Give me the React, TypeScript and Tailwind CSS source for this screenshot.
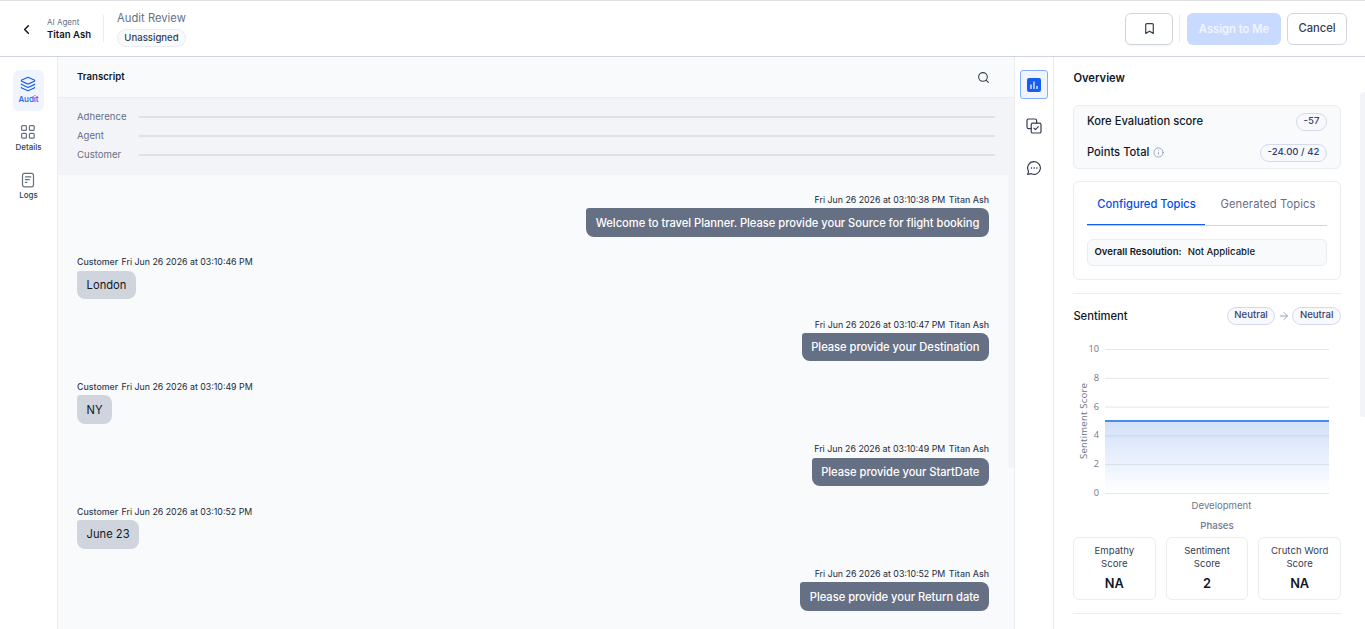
import React from "react";
import { Bookmark, ChevronLeft, Info, Layers, Search, ArrowRight } from "lucide-react";

const messages = [
  { from: "agent", time: "03:10:38", text: "Welcome to travel Planner. Please provide your Source for flight booking" },
  { from: "customer", time: "03:10:46", text: "London" },
  { from: "agent", time: "03:10:47", text: "Please provide your Destination" },
  { from: "customer", time: "03:10:49", text: "NY" },
  { from: "agent", time: "03:10:49", text: "Please provide your StartDate" },
  { from: "customer", time: "03:10:52", text: "June 23" },
  { from: "agent", time: "03:10:52", text: "Please provide your Return date" },
];

function Header() {
  return (
    <header className="flex h-[57px] shrink-0 items-start border-t border-b border-t-[#e0e0e2] border-b-[#d0d5dd] bg-white pr-[18px] pl-[19px]">
      <ChevronLeft className="mt-[21px] h-[15px] w-[15px] text-[#101828]" strokeWidth={2.4} />
      <div className="mt-[15px] ml-[13px] w-[56px]">
        <div className="h-[12px] text-[8px] leading-[13px] whitespace-nowrap text-[#667085]">AI Agent</div>
        <div className="text-[9.6px] leading-[13px] font-semibold whitespace-nowrap text-[#101828]">Titan Ash</div>
      </div>
      <div className="mt-[14px] h-[27px] w-px bg-[#eaecf0]" />
      <div className="mt-[9px] ml-[13px]">
        <div className="h-[19px] text-[11.2px] leading-[16px] tracking-[0.03px] whitespace-nowrap text-[#667085]">Audit Review</div>
        <div className="flex h-[18px] w-[69px] items-center justify-center rounded-full border border-[#eaecf0] bg-[#f9fafb] text-[9.6px] font-medium text-[#344054]">Unassigned</div>
      </div>
      <div className="mt-3 ml-auto flex">
        <button className="flex h-8 w-12 items-center justify-center rounded-md border border-[#d0d5dd] bg-white pb-px shadow-xs">
          <Bookmark className="h-[13px] w-[13px] text-[#344054]" strokeWidth={2.2} />
        </button>
        <div className="mt-[2px] ml-[6px] h-[27px] w-px bg-[#eaecf0]" />
        <button className="ml-[7px] h-8 w-[94px] rounded-md bg-[#c8daff] text-[11.2px] font-semibold text-[#f1f5ff]">Assign to Me</button>
        <button className="ml-[6px] h-8 w-[60px] rounded-md border border-[#d0d5dd] bg-white pb-px text-[11.2px] font-medium text-[#344054]">Cancel</button>
      </div>
    </header>
  );
}

function NavItem({ label, active, children }: { label: string; active?: boolean; children: React.ReactNode }) {
  return (
    <div className={active ? "flex h-[41px] w-[31px] flex-col items-center rounded-md bg-[#eff4ff] pt-[6px] text-[#155eef]" : "flex h-[41px] w-[31px] flex-col items-center pt-[6px] text-[#667085]"}>
      {children}
      <span className={active ? "mt-px text-[8px] leading-[12px] font-medium" : "mt-px text-[8px] leading-[12px] font-medium text-[#344054]"}>{label}</span>
    </div>
  );
}

function SideNav() {
  return (
    <nav className="flex w-[58px] shrink-0 flex-col items-center gap-[7px] border-r border-[#eaecf0] bg-white pt-[13px]">
      <NavItem label="Audit" active>
        <Layers className="mr-px h-4 w-4" strokeWidth={1.7} />
      </NavItem>
      <NavItem label="Details">
        <svg className="mr-px h-4 w-4" viewBox="0 0 16 16" fill="none" stroke="currentColor" strokeWidth="1.2">
          <rect x="1.6" y="1.6" width="4.8" height="4.8" rx="1" />
          <rect x="9.4" y="1.6" width="4.8" height="4.8" rx="1" />
          <rect x="1.6" y="9.4" width="4.8" height="4.8" rx="1" />
          <rect x="9.4" y="9.4" width="4.8" height="4.8" rx="1" />
        </svg>
      </NavItem>
      <NavItem label="Logs">
        <svg className="mr-px h-4 w-4" viewBox="0 0 16 16" fill="none" stroke="currentColor" strokeWidth="1.2" strokeLinecap="round">
          <rect x="2.5" y="1.4" width="11" height="13.4" rx="2" />
          <path d="M5.4 4.8h5.4M5.4 7.6h4M5.4 10.4h1.4" />
        </svg>
      </NavItem>
    </nav>
  );
}

function Track({ label }: { label: string }) {
  return (
    <div className="flex h-[19.2px] items-center">
      <span className="w-[62px] text-[9.6px] leading-[14px] text-[#667085]">{label}</span>
      <span className="h-[2px] flex-1 bg-[#dfe1e7]" />
    </div>
  );
}

function Transcript() {
  return (
    <section className="flex min-w-0 flex-1 flex-col bg-[#f9fafb]">
      <div className="flex h-[41px] shrink-0 items-center justify-between border-b border-[#eaecf0] pr-[24px] pl-[19px]">
        <h2 className="text-[9.6px] font-semibold text-[#101828]">Transcript</h2>
        <Search className="h-[13px] w-[13px] text-[#344054]" strokeWidth={2} />
      </div>
      <div className="h-[77px] shrink-0 bg-[#f2f4f7] pt-[9.2px] pr-[19px] pl-[19px]">
        <Track label="Adherence" />
        <Track label="Agent" />
        <Track label="Customer" />
      </div>
      <div className="flex min-h-0 flex-1">
        <div className="flex-1 overflow-hidden pt-[18px] pr-[19px] pl-[19px]">
          {messages.map((m, i) =>
            m.from === "agent" ? (
              <div key={i} className="flex h-[62.35px] flex-col items-end">
                <div className="h-[15.2px] text-[8.8px] leading-[13px] text-[#1d2939]">
                  Fri Jun 26 2026 at {m.time} PM <span className="ml-px font-medium tracking-[0.04px] text-[#344054]">Titan Ash</span>
                </div>
                <div className="flex h-[28.6px] items-center rounded-tl-[3px] rounded-tr-lg rounded-b-lg bg-[#667085] px-[9.6px] pt-[1.3px] text-[11.2px] font-medium tracking-[-0.04px] text-white">{m.text}</div>
              </div>
            ) : (
              <div key={i} className="flex h-[62.35px] flex-col items-start">
                <div className="h-[15.2px] text-[8.8px] leading-[13px] text-[#1d2939]">
                  <span className="mr-px font-medium text-[#344054]">Customer</span> Fri Jun 26 2026 at {m.time} PM
                </div>
                <div className="flex h-[28.6px] items-center rounded-tl-[3px] rounded-tr-lg rounded-b-lg bg-[#d0d5dd] px-[9.6px] pt-px text-[11.2px] text-[#101828]">{m.text}</div>
              </div>
            ),
          )}
        </div>
        <div className="h-[293px] w-[6px] rounded-b bg-[#f2f4f7]" />
      </div>
    </section>
  );
}

function ToolRail() {
  return (
    <div className="flex w-[40px] shrink-0 flex-col items-center border-x border-[#eaecf0] bg-white pt-[13px] text-[#344054]">
      <div className="flex h-[29px] w-[28px] items-center justify-center rounded-[3px] border border-[#84adff] bg-[#eff4ff]">
        <svg className="h-[14px] w-[14px]" viewBox="0 0 14 14">
          <rect width="14" height="14" rx="2" fill="#155eef" />
          <path d="M4 6.5v4.5M7 3.5v7.5M10 8v3" stroke="#fff" strokeWidth="1.2" />
        </svg>
      </div>
      <svg className="mt-[19px] h-4 w-4" viewBox="0 0 16 16" fill="none" stroke="currentColor" strokeWidth="1.2" strokeLinecap="round" strokeLinejoin="round">
        <path d="M5.2 10.6H2.6A1.6 1.6 0 0 1 1 9V2.6A1.6 1.6 0 0 1 2.6 1H9a1.6 1.6 0 0 1 1.6 1.6v2.6" />
        <rect x="5.2" y="5.2" width="9.8" height="9.8" rx="1.6" />
        <path d="M8 10.2l1.5 1.4 2.8-2.9" />
      </svg>
      <svg className="mt-[26px] h-4 w-4" viewBox="0 0 16 16" fill="none" stroke="currentColor" strokeWidth="1.2" strokeLinejoin="round">
        <path d="M8.2 1.7a6.3 6.3 0 1 1-2.8 12L1.7 14.3l.9-3A6.3 6.3 0 0 1 8.2 1.7Z" />
        <path d="M4.9 8h1.2M7.6 8h1.2M10.3 8h1.2" strokeWidth="1.4" />
      </svg>
    </div>
  );
}

function Pill({ children }: { children: React.ReactNode }) {
  return <span className="flex h-[18px] items-center rounded-full border border-[#d5d9eb] bg-[#f8f9fc] px-[6.6px] pb-px text-[9.6px] font-medium whitespace-nowrap text-[#363f72]">{children}</span>;
}

function SentimentChart() {
  return (
    <svg className="mt-[13px] block h-[199px] w-[268px]" viewBox="0 0 268 199" fontFamily="Inter, sans-serif" fill="#6e7787">
      <defs>
        <linearGradient id="area" x1="0" y1="0" x2="0" y2="1">
          <stop offset="0" stopColor="#1b67df" stopOpacity="0.2" />
          <stop offset="1" stopColor="#1b67df" stopOpacity="0" />
        </linearGradient>
      </defs>
      {[10, 8, 6, 4, 2, 0].map((v, i) => (
        <g key={v}>
          <path d={`M32 ${11.5 + i * 28.8}H256`} stroke="#e5e7ec" />
          <text x="26" y={14 + i * 28.8} textAnchor="end" fontSize="9.2" fontFamily="Open Sans, sans-serif">{v}</text>
        </g>
      ))}
      <rect x="32" y="83" width="224" height="72" fill="url(#area)" />
      <path d="M32 83H256" stroke="#4a8af4" strokeWidth="2" />
      <text transform="translate(14 83) rotate(-90)" textAnchor="middle" fontSize="9.6" textLength="76" fontFamily="Open Sans, sans-serif">Sentiment Score</text>
      <text x="148.5" y="171" textAnchor="middle" fontSize="9.6">Development</text>
      <text x="144" y="191" textAnchor="middle" fontSize="9.6" fontWeight="500">Phases</text>
    </svg>
  );
}

function ScoreCard({ name, value }: { name: string; value: string }) {
  return (
    <div className="flex h-[63px] flex-1 flex-col items-center rounded-md border border-[#eaecf0] pt-[6px]">
      <span className="text-[9.6px] leading-[13px] whitespace-nowrap text-[#344054]">{name}</span>
      <span className="text-[9.6px] leading-[13px] text-[#344054]">Score</span>
      <span className="mt-[6px] text-[12.8px] leading-[16px] font-semibold text-[#101828]">{value}</span>
    </div>
  );
}

function Overview() {
  return (
    <aside className="flex w-[311px] shrink-0 bg-white">
      <div className="w-[306px] shrink-0 overflow-hidden pr-[19px] pl-[19px]">
        <h2 className="mt-[13px] h-[35px] pl-[0.4px] text-[11.2px] leading-[17px] font-semibold text-[#101828]">Overview</h2>
        <div className="h-[64px] rounded-md border border-[#eaecf0] bg-[#f9fafb] px-[13px] text-[11.2px] font-medium text-[#101828]">
          <div className="flex h-[31px] items-center justify-between">
            Kore Evaluation score<Pill>-57</Pill>
          </div>
          <div className="flex h-[31px] items-center justify-between">
            <span className="flex items-center gap-1">
              Points Total <Info className="h-[11px] w-[11px] text-[#98a2b3]" strokeWidth={2} />
            </span>
            <Pill>-24.00 / 42</Pill>
          </div>
        </div>
        <div className="mt-[12px] h-[99px] rounded-md border border-[#eaecf0] px-[13px]">
          <div className="flex h-[44px] items-start text-[11.2px]">
            <div className="flex w-[118px] shrink-0 flex-col font-medium text-[#004eeb]">
              <span className="flex h-[42px] items-center justify-center pt-[3px] pl-px">Configured Topics</span>
              <span className="h-px bg-[#155eef]" />
              <span className="h-px bg-[#bccbf0]" />
            </div>
            <div className="flex h-[44px] flex-1 items-center justify-center border-b border-[#d0d5dd] pt-[2px] pl-[4px] tracking-[0.1px] whitespace-nowrap text-[#667085]">Generated Topics</div>
          </div>
          <div className="mt-[13px] flex h-[27px] items-center rounded-md border border-[#eaecf0] bg-[#f9fafb] px-[6.5px] pb-px text-[9.6px] text-[#101828]">
            <span className="font-semibold">Overall Resolution:</span>
            <span className="ml-[6px] font-medium">Not Applicable</span>
          </div>
        </div>
        <div className="mt-[13px] h-px bg-[#eaecf0]" />
        <div className="mt-[13px] flex h-[18px] items-center text-[11.2px] font-medium text-[#101828]">
          <span className="mr-auto pt-px pl-[0.4px]">Sentiment</span>
          <Pill>Neutral</Pill>
          <ArrowRight className="mx-[2.5px] h-[12px] w-[12px] text-[#98a2b3]" strokeWidth={2} />
          <Pill>Neutral</Pill>
        </div>
        <SentimentChart />
        <div className="flex gap-[10px]">
          <ScoreCard name="Empathy" value="NA" />
          <ScoreCard name="Sentiment" value="2" />
          <ScoreCard name="Crutch Word" value="NA" />
        </div>
        <div className="mt-[13px] h-px bg-[#eaecf0]" />
      </div>
      <div className="mt-[35px] h-[325px] w-[5px] rounded-l bg-[#f2f4f7]" />
    </aside>
  );
}

export default function App() {
  return (
    <div className="flex h-[629px] w-[1365px] flex-col overflow-hidden bg-white font-[Inter,sans-serif]">
      <Header />
      <div className="flex min-h-0 flex-1">
        <SideNav />
        <Transcript />
        <ToolRail />
        <Overview />
      </div>
    </div>
  );
}
